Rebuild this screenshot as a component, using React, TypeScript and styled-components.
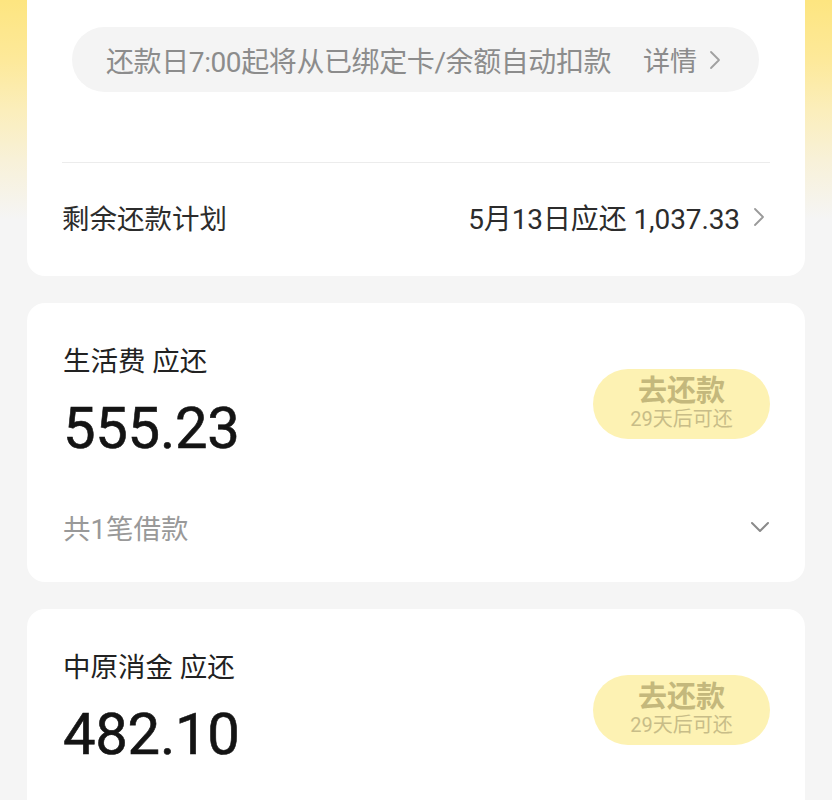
import React from "react";
import styled, { createGlobalStyle } from "styled-components";

const GlobalStyle = createGlobalStyle`
  html, body {
    margin: 0;
    padding: 0;
    background: #f5f5f5;
  }
  body {
    font-family: Roboto, "Noto Sans CJK SC", "Noto Sans", sans-serif;
    -webkit-font-smoothing: antialiased;
  }
`;

interface LoanItem {
  name: string;
  amount: string;
  count?: number;
}

// the second card's footer sits below the fold in the screenshot
const loans: LoanItem[] = [
  { name: "生活费 应还", amount: "555.23", count: 1 },
  { name: "中原消金 应还", amount: "482.10" },
];

const ChevronRight = ({ color = "#9a9a9a" }: { color?: string }) => (
  <svg width="12" height="20" viewBox="0 0 12 20" fill="none">
    <path d="M2 2 L10 10 L2 18" stroke={color} strokeWidth="1.8" strokeLinecap="round" strokeLinejoin="round" />
  </svg>
);

const ChevronDown = () => (
  <svg width="20" height="12" viewBox="0 0 20 12" fill="none">
    <path d="M2 2 L10 10 L18 2" stroke="#8a8a8a" strokeWidth="2" strokeLinecap="round" strokeLinejoin="round" />
  </svg>
);

const LoanCard = ({ name, amount, count }: LoanItem) => (
  <Card>
    <LoanTop>
      <LoanInfo>
        <LoanTitle>{name}</LoanTitle>
        <Amount>{amount}</Amount>
      </LoanInfo>
      <RepayButton>
        <RepayLabel>去还款</RepayLabel>
        <RepayHint>29天后可还</RepayHint>
      </RepayButton>
    </LoanTop>
    {count !== undefined ? (
      <LoanFooter>
        <FooterText>共{count}笔借款</FooterText>
        <ChevronDown />
      </LoanFooter>
    ) : (
      <Spacer />
    )}
  </Card>
);

const App = () => {
  return (
    <Page>
      <GlobalStyle />
      <SummaryCard>
        <Notice>
          <NoticeText>还款日7:00起将从已绑定卡/余额自动扣款</NoticeText>
          <NoticeLink>
            详情
            <ChevronRight color="#a0a0a0" />
          </NoticeLink>
        </Notice>
        <Divider />
        <PlanRow>
          <PlanLabel>剩余还款计划</PlanLabel>
          <PlanValue>
            5月13日应还 1,037.33
            <ChevronRight />
          </PlanValue>
        </PlanRow>
      </SummaryCard>
      {loans.map((l) => (
        <LoanCard key={l.name} {...l} />
      ))}
    </Page>
  );
};

export default App;

const Page = styled.div`
  height: 800px;
  overflow: hidden;
  padding: 0 27px;
  box-sizing: border-box;
  display: flex;
  flex-direction: column;
  gap: 27px;
  background: linear-gradient(
      180deg,
      #fde580 0px,
      #fde99a 60px,
      #fbeebb 110px,
      #f8f1d8 160px,
      #f5f5f5 220px
    )
    no-repeat top / 100% 260px,
    #f5f5f5;
`;

const SummaryCard = styled.div`
  flex-shrink: 0;
  background: #ffffff;
  border-radius: 0 0 18px 18px;
  padding: 27px 35px 44px;
  display: flex;
  flex-direction: column;
`;

const Notice = styled.div`
  margin: 0 11px 0 10px;
  height: 65px;
  border-radius: 33px;
  background: #f4f4f4;
  display: flex;
  align-items: center;
  padding: 0 38px 0 34px;
`;

const NoticeText = styled.span`
  flex: 1;
  font-size: 28px;
  color: #8c8c8c;
  letter-spacing: -0.4px;
  white-space: nowrap;
`;

const NoticeLink = styled.span`
  display: flex;
  align-items: center;
  gap: 12px;
  font-size: 27px;
  color: #8c8c8c;
`;

const Divider = styled.div`
  height: 1px;
  background: #ececec;
  margin-top: 70px;
`;

const PlanRow = styled.div`
  margin-top: 39px;
  height: 30px;
  display: flex;
  align-items: center;
  justify-content: space-between;
`;

const PlanLabel = styled.span`
  font-size: 27.5px;
  color: #2c2c2c;
`;

const PlanValue = styled.span`
  display: flex;
  align-items: center;
  gap: 13px;
  font-size: 28px;
  color: #2c2c2c;
  margin-right: 5px;
  letter-spacing: -0.1px;
`;

const Card = styled.div`
  flex-shrink: 0;
  background: #ffffff;
  border-radius: 18px;
  padding: 43px 35px 40px 36px;
  display: flex;
  flex-direction: column;
`;

const LoanTop = styled.div`
  display: flex;
  align-items: center;
  justify-content: space-between;
`;

const LoanInfo = styled.div`
  display: flex;
  flex-direction: column;
`;

const LoanTitle = styled.div`
  font-size: 27.5px;
  line-height: 32px;
  color: #222;
`;

const Amount = styled.div`
  margin-top: 21px;
  font-size: 58px;
  line-height: 58px;
  font-weight: 400;
  color: #141414;
  letter-spacing: -0.3px;
  -webkit-text-stroke: 0.6px #141414;
`;

const RepayButton = styled.div`
  width: 177px;
  height: 70px;
  border-radius: 35px;
  background: #fdf2b3;
  display: flex;
  flex-direction: column;
  align-items: center;
  justify-content: center;
  margin-top: 4px;
`;

const RepayLabel = styled.div`
  font-size: 29px;
  line-height: 31px;
  font-weight: 700;
  color: #c4b87c;
`;

const RepayHint = styled.div`
  font-size: 20px;
  line-height: 24px;
  color: #c8bd88;
`;

const LoanFooter = styled.div`
  margin-top: 55px;
  height: 30px;
  display: flex;
  align-items: center;
  justify-content: space-between;
`;

const FooterText = styled.span`
  font-size: 27.5px;
  color: #999;
`;

const Spacer = styled.div`
  height: 86px;
`;
